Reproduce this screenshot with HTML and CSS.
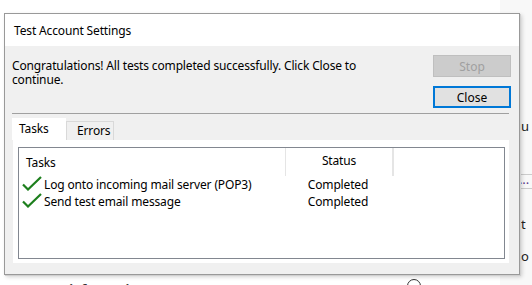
FILE: index.html
```html
<!DOCTYPE html>
<html lang="en">
<head>
    <meta charset="UTF-8">
    <meta name="viewport" content="width=device-width, initial-scale=1.0">
    <title>Test Account Settings</title>
    <link rel="stylesheet" href="styles.css">
</head>
<body>
    <div class="desktop">
        <div class="behind-right">
            <span class="frag frag-u">u</span>
            <span class="frag frag-dots">...</span>
            <span class="frag frag-t">t</span>
            <span class="frag frag-o">o</span>
        </div>
        <div class="behind-bottom">
            <span class="frag-title">Account information</span>
            <span class="radio"></span>
        </div>

        <div class="dialog">
            <div class="titlebar">Test Account Settings</div>
            <div class="dialog-body">
                <div class="top">
                    <p class="message">Congratulations! All tests completed successfully. Click Close to continue.</p>
                    <div class="buttons">
                        <button class="btn" disabled>Stop</button>
                        <button class="btn btn-default">Close</button>
                    </div>
                </div>
                <div class="separator"></div>
                <div class="tabs">
                    <div class="tab active">Tasks</div>
                    <div class="tab">Errors</div>
                </div>
                <div class="tab-panel">
                    <div class="listview">
                        <div class="lv-head">
                            <div class="col col-task">Tasks</div>
                            <div class="col col-status">Status</div>
                            <div class="col col-rest"></div>
                        </div>
                        <div class="lv-row">
                            <div class="col col-task">
                                <svg class="check" width="20" height="15" viewBox="0 0 20 15"><path d="M1 8.5 L6 13.5 L19 1" fill="none" stroke="#1d7f1d" stroke-width="2.2"/></svg>
                                Log onto incoming mail server (POP3)
                            </div>
                            <div class="col col-status">Completed</div>
                        </div>
                        <div class="lv-row">
                            <div class="col col-task">
                                <svg class="check" width="20" height="15" viewBox="0 0 20 15"><path d="M1 8.5 L6 13.5 L19 1" fill="none" stroke="#1d7f1d" stroke-width="2.2"/></svg>
                                Send test email message
                            </div>
                            <div class="col col-status">Completed</div>
                        </div>
                    </div>
                </div>
            </div>
        </div>
    </div>
</body>
</html>
```
FILE: styles.css
```css
body {
  margin: 0;
  padding: 0;
  font-family: 'Noto Sans', 'Liberation Sans', sans-serif;
  font-size: 12px;
  letter-spacing: -0.15px;
  color: #000;
  background: #fff;
  overflow: hidden;
}

.desktop {
  position: relative;
  width: 532px;
  height: 285px;
  overflow: hidden;
}

/* pieces of the main window that peek out behind the dialog */
.behind-right {
  position: absolute;
  left: 500px;
  top: 0;
  width: 32px;
  height: 285px;
  background: #f8f8f8;
}

.frag {
  position: absolute;
  left: 21px;
  font-size: 13px;
  color: #222;
}

.frag-u { top: 117px; }
.frag-t { top: 215px; }
.frag-o { top: 247px; }

.frag-dots {
  top: 174px;
  left: 19px;
  width: 20px;
  height: 13px;
  line-height: 9px;
  color: #5b3a8a;
  border-top: 1px solid #ccc;
  border-bottom: 1px solid #ccc;
}

.behind-bottom {
  position: absolute;
  left: 0;
  top: 270px;
  width: 532px;
  height: 20px;
}

.frag-title {
  position: absolute;
  left: 14px;
  top: 10px;
  font-weight: bold;
  font-size: 13px;
  color: #333;
}

.radio {
  position: absolute;
  left: 407px;
  top: 9px;
  width: 12px;
  height: 12px;
  border: 1px solid #333;
  border-radius: 50%;
}

.dialog {
  position: absolute;
  left: 4px;
  top: 13px;
  width: 514px;
  height: 260px;
  border: 1px solid #999;
  background: #f0f0f0;
  box-shadow: 1px 1px 0 #d0d0d0, 2px 2px 4px rgba(0, 0, 0, 0.18);
  display: flex;
  flex-direction: column;
}

.titlebar {
  height: 32px;
  line-height: 33px;
  padding-left: 9px;
  background: #fff;
}

.dialog-body {
  flex: 1;
  padding: 0 8px 11px 7px;
  display: flex;
  flex-direction: column;
}

.top {
  display: flex;
  justify-content: space-between;
  height: 67px;
}

.message {
  margin: 13px 0 0 0;
  width: 360px;
  line-height: 14px;
}

.buttons {
  display: flex;
  flex-direction: column;
  gap: 9px;
  margin-top: 9px;
}

.btn {
  width: 78px;
  height: 22px;
  font-family: inherit;
  font-size: 12px;
  border: 1px solid #adadad;
  background: #e1e1e1;
  color: #000;
  padding: 0;
}

.btn:disabled {
  background: #cccccc;
  border-color: #bfbfbf;
  color: #a0a0a0;
}

.btn-default {
  border: 2px solid #0078d7;
}

.separator {
  height: 1px;
  background: #a0a0a0;
  margin: 0 2px 0 0;
}

.tabs {
  display: flex;
  align-items: flex-end;
  margin-top: 4px;
  height: 22px;
}

.tab {
  height: 18px;
  line-height: 18px;
  padding: 0 10px;
  border: 1px solid #d9d9d9;
  border-bottom: none;
  background: #f0f0f0;
  width: 26px;
}

.tab.active {
  height: 21px;
  line-height: 19px;
  width: 36px;
  background: #fff;
  border-color: #fff;
  padding-left: 6px;
  padding-right: 10px;
}

.tab-panel {
  flex: 1;
  background: #fff;
  margin-left: 1px;
  margin-right: 2px;
  padding: 7px 4px 4px 5px;
  display: flex;
}

.listview {
  flex: 1;
  border: 1px solid #828790;
  background: #fff;
}

.lv-head {
  display: flex;
  height: 28px;
  line-height: 25px;
}

.lv-head .col {
  border-right: 1px solid #e5e5e5;
}

.lv-row {
  display: flex;
  height: 17px;
  line-height: 17px;
}

.col-task {
  width: 259px;
  padding-left: 7px;
  display: flex;
  align-items: center;
  white-space: nowrap;
}

.col-status {
  width: 106px;
  text-align: center;
}

.col-rest {
  width: 0;
}

.check {
  margin: 0 2px 2px -4px;
}
```
